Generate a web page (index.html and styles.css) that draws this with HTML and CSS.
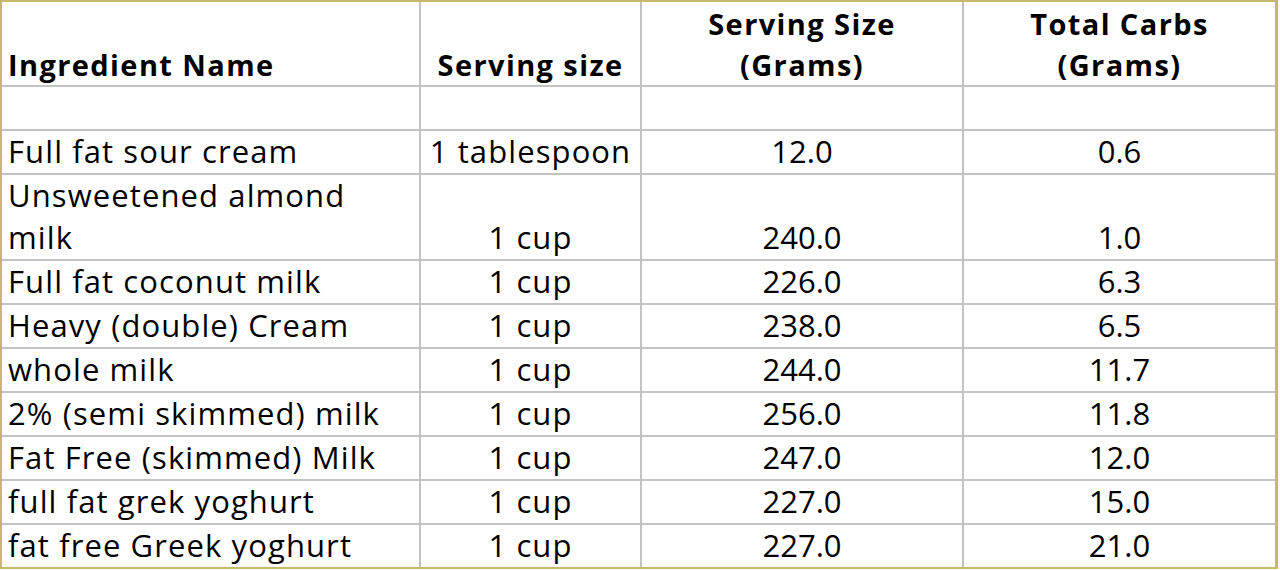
FILE: index.html
```html
<!DOCTYPE html>
<html lang="en">
<head>
<meta charset="utf-8">
<title>Ingredient Carbs</title>
<link rel="stylesheet" href="styles.css">
</head>
<body>
<div class="sheet">
  <div class="cell head">Ingredient Name</div>
  <div class="cell head center">Serving size</div>
  <div class="cell head center">Serving Size<br>(Grams)</div>
  <div class="cell head center">Total Carbs<br>(Grams)</div>

  <div class="cell"></div><div class="cell"></div><div class="cell"></div><div class="cell"></div>

  <div class="cell">Full fat sour cream</div>
  <div class="cell center">1 tablespoon</div>
  <div class="cell center num">12.0</div>
  <div class="cell center num">0.6</div>

  <div class="cell tall">Unsweetened almond<br>milk</div>
  <div class="cell tall center">1 cup</div>
  <div class="cell tall center num">240.0</div>
  <div class="cell tall center num">1.0</div>

  <div class="cell">Full fat coconut milk</div>
  <div class="cell center">1 cup</div>
  <div class="cell center num">226.0</div>
  <div class="cell center num">6.3</div>

  <div class="cell">Heavy (double) Cream</div>
  <div class="cell center">1 cup</div>
  <div class="cell center num">238.0</div>
  <div class="cell center num">6.5</div>

  <div class="cell">whole milk</div>
  <div class="cell center">1 cup</div>
  <div class="cell center num">244.0</div>
  <div class="cell center num">11.7</div>

  <div class="cell">2% (semi skimmed) milk</div>
  <div class="cell center">1 cup</div>
  <div class="cell center num">256.0</div>
  <div class="cell center num">11.8</div>

  <div class="cell">Fat Free (skimmed) Milk</div>
  <div class="cell center">1 cup</div>
  <div class="cell center num">247.0</div>
  <div class="cell center num">12.0</div>

  <div class="cell">full fat grek yoghurt</div>
  <div class="cell center">1 cup</div>
  <div class="cell center num">227.0</div>
  <div class="cell center num">15.0</div>

  <div class="cell">fat free Greek yoghurt</div>
  <div class="cell center">1 cup</div>
  <div class="cell center num">227.0</div>
  <div class="cell center num">21.0</div>
</div>
</body>
</html>
```

FILE: styles.css
```css
html, body {
  margin: 0;
  padding: 0;
  background: #ffffff;
}

.sheet {
  width: 1273px;
  display: grid;
  grid-template-columns: 417px 219px 320px 311px;
  grid-template-rows: 83px 42px 42px 84px repeat(7, 42px);
  gap: 2px;
  background: #c3c3c3;
  border-style: solid;
  border-color: #c8b968;
  border-width: 2px 3px 2px 2px;
  font-family: "Open Sans", "Lato", sans-serif;
  color: #000000;
}

.cell {
  background: #ffffff;
  display: flex;
  flex-direction: column;
  justify-content: flex-end;
  padding: 0 6px 1px 6px;
  font-size: 31px;
  line-height: 42px;
  letter-spacing: 1.1px;
  white-space: nowrap;
}

.num {
  letter-spacing: 0;
}

.head {
  font-weight: 700;
  font-size: 29px;
  line-height: 41px;
  padding-bottom: 0;
  letter-spacing: 1.4px;
}

.center {
  text-align: center;
  align-items: center;
}
```
